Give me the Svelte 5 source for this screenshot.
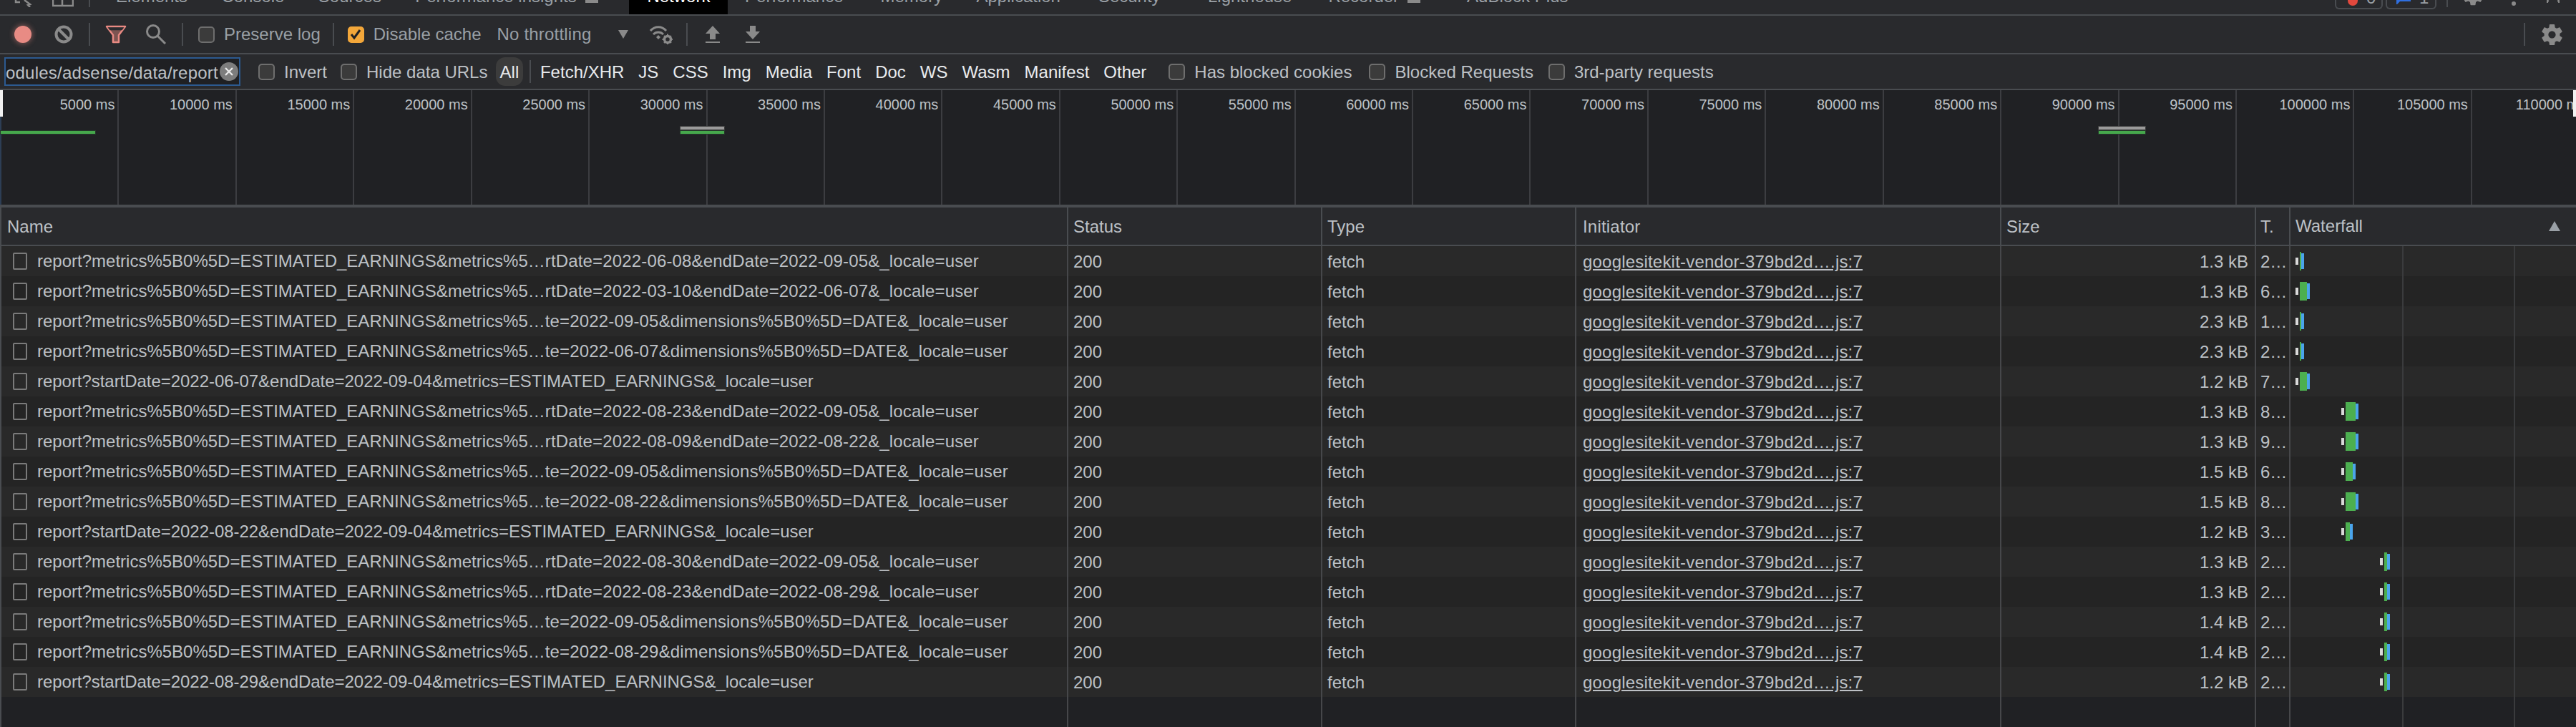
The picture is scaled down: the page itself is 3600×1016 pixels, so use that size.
<script>
  const tabs = [
    { t: 'Elements', x: 0 }, { t: 'Console', x: 0 }, { t: 'Sources', x: 0 }, { t: 'Performance insights', x: 0, flag: true },
    { t: 'Network', x: 20, on: true }, { t: 'Performance', x: 0 }, { t: 'Memory', x: 4.6 }, { t: 'Application', x: 0 },
    { t: 'Security', x: 5.6 }, { t: 'Lighthouse', x: 19 }, { t: 'Recorder', x: 3.6, flag: true }, { t: 'AdBlock Plus', x: 17.6 }
  ];
  const types = ['Fetch/XHR', 'JS', 'CSS', 'Img', 'Media', 'Font', 'Doc', 'WS', 'Wasm', 'Manifest', 'Other'];
  const ticks = Array.from({ length: 22 }, (_, i) => (i + 1) * 5000);
  const head = 'report?metrics%5B0%5D=ESTIMATED_EARNINGS&metrics%5…';
  const tail = (a, b) => ({ head, rest: `rtDate=${a}&endDate=${b}&_locale=user` });
  const dim = (a) => ({ head, rest: `te=${a}&dimensions%5B0%5D=DATE&_locale=user` });
  const start = (a, b) => ({ head: '', rest: `report?startDate=${a}&endDate=${b}&metrics=ESTIMATED_EARNINGS&_locale=user`, short: true });
  // l = left of queue bar, g = green start, gw = green width, bw = blue width (px inside waterfall cell)
  const a1 = { l: 7, g: 13, gw: 2, bw: 4 }, a2 = { l: 7, g: 13, gw: 10, bw: 4 };
  const b1 = { l: 71, g: 77, gw: 14, bw: 4 }, b2 = { l: 71, g: 77, gw: 10, bw: 4 }, b3 = { l: 71, g: 77, gw: 6, bw: 4 };
  const c = { l: 125, g: 131, gw: 4, bw: 4 };
  const rows = [
    [tail('2022-06-08', '2022-09-05'), '1.3', '2', a1],
    [tail('2022-03-10', '2022-06-07'), '1.3', '6', a2],
    [dim('2022-09-05'), '2.3', '1', a1],
    [dim('2022-06-07'), '2.3', '2', a1],
    [start('2022-06-07', '2022-09-04'), '1.2', '7', a2],
    [tail('2022-08-23', '2022-09-05'), '1.3', '8', b1],
    [tail('2022-08-09', '2022-08-22'), '1.3', '9', b1],
    [dim('2022-09-05'), '1.5', '6', b2],
    [dim('2022-08-22'), '1.5', '8', b1],
    [start('2022-08-22', '2022-09-04'), '1.2', '3', b3],
    [tail('2022-08-30', '2022-09-05'), '1.3', '2', c],
    [tail('2022-08-23', '2022-08-29'), '1.3', '2', c],
    [dim('2022-09-05'), '1.4', '2', c],
    [dim('2022-08-29'), '1.4', '2', c],
    [start('2022-08-29', '2022-09-04'), '1.2', '2', c]
  ];
  const gear = 'M19.43 12.98c.04-.32.07-.64.07-.98s-.03-.66-.07-.98l2.11-1.65c.19-.15.24-.42.12-.64l-2-3.46c-.12-.22-.39-.3-.61-.22l-2.49 1c-.52-.4-1.08-.73-1.69-.98l-.38-2.65C14.46 2.18 14.25 2 14 2h-4c-.25 0-.46.18-.49.42l-.38 2.65c-.61.25-1.17.59-1.69.98l-2.49-1c-.23-.09-.49 0-.61.22l-2 3.46c-.13.22-.07.49.12.64l2.11 1.65c-.04.32-.07.65-.07.98s.03.66.07.98l-2.11 1.65c-.19.15-.24.42-.12.64l2 3.46c.12.22.39.3.61.22l2.49-1c.52.4 1.08.73 1.69.98l.38 2.65c.03.24.24.42.49.42h4c.25 0 .46-.18.49-.42l.38-2.65c.61-.25 1.17-.59 1.69-.98l2.49 1c.23.09.49 0 .61-.22l2-3.46c.12-.22.07-.49-.12-.64l-2.11-1.65zM12 15.5c-1.93 0-3.5-1.57-3.5-3.5s1.57-3.5 3.5-3.5 3.5 1.57 3.5 3.5-1.57 3.5-3.5 3.5z';
</script>

<div class="app">
  <header class="tabbar">
    <div class="tools">
      <svg class="inspect" width="28" height="10" viewBox="0 0 28 10"><path d="M2 0v3h6M14 0l8 6-3 1 3 3" fill="none" stroke="#8a8a8a" stroke-width="2.5"/></svg>
      <svg class="device" width="30" height="10" viewBox="0 0 30 10"><path d="M1 0v8h28V0M14 0v8" fill="none" stroke="#8a8a8a" stroke-width="2.5"/></svg>
    </div>
    <i class="vsep top"></i>
    <nav class="tabs">
      {#each tabs as tab}
        <span class="tab" class:on={tab.on} style="margin-left:{tab.x}px">{tab.t}{#if tab.flag}<i class="flag"></i>{/if}</span>
      {/each}
    </nav>
    <div class="status">
      <span class="badge one"><i class="dot"></i><b>0</b></span>
      <span class="badge two"><svg width="20" height="6" viewBox="0 0 20 6"><path d="M0 0h20v2H5L1 6H0z" fill="#2f6fe0"/></svg><b>1</b></span>
      <i class="vsep top end"></i>
      <svg class="tgear" width="34" height="34" viewBox="0 0 24 24"><path d={gear} fill="#8a8a8a"/></svg>
      <i class="kebab"></i>
      <svg class="close" width="18" height="4" viewBox="0 0 18 4"><path d="M2 0l-2 4M16 0l2 4" stroke="#8a8a8a" stroke-width="3"/></svg>
    </div>
  </header>

  <section class="toolbar">
    <span class="record"></span>
    <svg class="clear" width="26" height="26" viewBox="0 0 26 26"><circle cx="13" cy="13" r="10.5" fill="none" stroke="#8a8a8a" stroke-width="4"/><path d="M6 6l14 14" stroke="#8a8a8a" stroke-width="4"/></svg>
    <i class="vsep s1"></i>
    <svg class="funnel" width="30" height="26" viewBox="0 0 30 26"><path d="M2 2h26l-9 12v10h-8V14z" fill="#7e5451" stroke="#e98a83" stroke-width="2.5" stroke-linejoin="round"/><path d="M3.5 3.2h23l-3 4h-17z" fill="#2a2b2f"/></svg>
    <svg class="search" width="30" height="28" viewBox="0 0 30 28"><circle cx="11" cy="10" r="8.5" fill="none" stroke="#8a8a8a" stroke-width="3"/><path d="M17 16l11 11" stroke="#8a8a8a" stroke-width="3"/></svg>
    <i class="vsep s2"></i>
    <label class="check preserve"><i class="box"></i><span>Preserve log</span></label>
    <i class="vsep s3"></i>
    <label class="check cache"><i class="box orange"><svg width="18" height="18" viewBox="0 0 18 18"><path d="M3 9l4 5 8-11" fill="none" stroke="#202124" stroke-width="3"/></svg></i><span>Disable cache</span></label>
    <span class="throttle">No throttling</span>
    <svg class="caret" width="14" height="12" viewBox="0 0 14 12"><path d="M0 0h14L7 12z" fill="#8a8a8a"/></svg>
    <svg class="wifi" width="32" height="28" viewBox="0 0 32 28">
      <path d="M1 9C7 2 17 2 23 9M5 14c4-4 10-4 14 0" fill="none" stroke="#8a8a8a" stroke-width="3"/>
      <path d="M9 18l3-3 3 3-3 3z" fill="#8a8a8a"/>
      <circle cx="25" cy="21" r="4.5" fill="none" stroke="#8a8a8a" stroke-width="3.5"/>
      <path d="M25 13.5v3M25 25.5v3M17.5 21h3M29.5 21h3M20 16l2 2M28 24l2 2M30 16l-2 2M22 24l-2 2" stroke="#8a8a8a" stroke-width="2"/>
    </svg>
    <i class="vsep s4"></i>
    <svg class="up" width="20" height="24" viewBox="0 0 20 24"><path d="M10 0l10 11h-6v8H6v-8H0z" fill="#8a8a8a"/><path d="M0 23h20" stroke="#8a8a8a" stroke-width="2"/></svg>
    <svg class="down" width="20" height="24" viewBox="0 0 20 24"><path d="M6 0h8v8h6L10 19 0 8h6z" fill="#8a8a8a"/><path d="M0 23h20" stroke="#8a8a8a" stroke-width="2"/></svg>
    <i class="vsep s5"></i>
    <svg class="sgear" width="35" height="35" viewBox="0 0 24 24"><path d={gear} fill="#8a8a8a"/></svg>
  </section>

  <section class="filterbar">
    <div class="input">
      <div class="value"><span>modules/adsense/data/report</span></div>
      <span class="x"><svg width="14" height="14" viewBox="0 0 14 14"><path d="M2 2l10 10M12 2L2 12" stroke="#e8e8e8" stroke-width="2.4"/></svg></span>
    </div>
    <label class="check f-invert"><i class="box"></i><span class="lt">Invert</span></label>
    <label class="check f-hide"><i class="box"></i><span class="lt">Hide data URLs</span></label>
    <span class="all">All</span>
    <i class="vsep s6"></i>
    <div class="types">{#each types as t}<span>{t}</span>{/each}</div>
    <label class="check f-blocked"><i class="box"></i><span class="lt">Has blocked cookies</span></label>
    <label class="check f-req"><i class="box"></i><span class="lt">Blocked Requests</span></label>
    <label class="check f-3rd"><i class="box"></i><span class="lt">3rd-party requests</span></label>
  </section>

  <section class="overview">
    {#each ticks as t}<div class="tick">{t} ms</div>{/each}
    <i class="edge"></i>
    <i class="handle left"></i>
    <i class="handle right"></i>
    <i class="mark g b1"></i>
    <i class="mark y b2"></i><i class="mark g b2"></i>
    <i class="mark y b3"></i><i class="mark g b3"></i>
  </section>

  <section class="table">
    <div class="row headrow">
      <div class="c name">Name</div><div class="c">Status</div><div class="c">Type</div>
      <div class="c init">Initiator</div><div class="c">Size</div><div class="c time">T.</div>
      <div class="c water">Waterfall<svg width="16" height="14" viewBox="0 0 16 14"><path d="M8 0l8 14H0z" fill="#9aa0a6"/></svg></div>
    </div>
    {#each rows as r, i}
      <div class="row body" class:alt={i % 2 === 1}>
        <div class="c name"><i class="file"></i><span class="nm">{r[0].head}<span class="rest" class:short={r[0].short}>{r[0].rest}</span></span></div>
        <div class="c">200</div>
        <div class="c">fetch</div>
        <div class="c init"><u>googlesitekit-vendor-379bd2d….js:7</u></div>
        <div class="c size">{r[1]} kB</div>
        <div class="c time">{r[2]}…</div>
        <div class="c grid">
          <i class="q" style="left:{r[3].l}px"></i>
          <i class="recv" style="left:{r[3].g}px;width:{r[3].gw}px"></i>
          <i class="dl" style="left:{r[3].g + r[3].gw}px;width:{r[3].bw}px"></i>
        </div>
      </div>
    {/each}
    <div class="row filler">
      <div class="c"></div><div class="c"></div><div class="c"></div><div class="c"></div><div class="c"></div><div class="c"></div><div class="c grid"></div>
    </div>
  </section>
</div>

<style>
  :global(body) { margin: 0; background: #202124; }
  .app { width: 3600px; height: 1016px; overflow: hidden; display: flex; flex-direction: column; font: 24px/28px "Liberation Sans", Arial, sans-serif; color: #bdc1c6; background: #202124; }
  i { display: block; }

  .tabbar { height: 20px; flex: none; display: flex; background: #292a2d; overflow: hidden; box-sizing: content-box; border-bottom: 2px solid #494c50; }
  .tools { width: 124px; flex: none; display: flex; align-items: flex-start; }
  .inspect { margin-left: 20px; }
  .device { margin-left: 25px; }
  .vsep { width: 2px; flex: none; background: #494c50; }
  .vsep.top { height: 10px; }
  .tabs { display: flex; margin-left: 12.3px; flex: none; }
  .tab { display: flex; align-items: flex-end; height: 9px; padding: 0 23.7px 11px; overflow: hidden; color: #9aa0a6; white-space: nowrap; flex: none; }
  .tab.on { background: #000; color: #fff; padding: 0 25px 11px; }
  .flag { width: 18px; height: 5px; background: #8a8a8a; margin: 0 0 5px 12px; align-self: flex-end; }
  .status { margin-left: auto; display: flex; align-items: flex-start; flex: none; }
  .badge { height: 11px; box-sizing: content-box; border: 2px solid #494c50; border-top: 0; border-radius: 0 0 6px 6px; display: flex; align-items: flex-end; overflow: hidden; }
  .badge b { font-weight: 400; color: #9aa0a6; line-height: 20px; height: 20px; margin-bottom: 4px; flex: none; }
  .one { width: 63px; }
  .two { width: 67px; margin: 0 14px 0 4px; }
  .dot { width: 14px; height: 8px; border-radius: 0 0 7px 7px; background: #e2483d; margin: 0 12px 3px 16px; flex: none; }
  .two svg { margin: 0 12px 5px 13px; flex: none; align-self: flex-start; }
  .tgear { margin: -24px 0 0 18px; }
  .kebab { width: 6px; height: 6px; border-radius: 50%; background: #8a8a8a; margin: 2px 0 0 37px; }
  .close { margin-left: 43px; margin-right: 23px; }

  .toolbar { height: 52px; flex: none; display: flex; align-items: center; background: #292a2d; border-bottom: 2px solid #494c50; color: #9aa0a6; }
  .toolbar .vsep { height: 32px; }
  .record { width: 24px; height: 24px; border-radius: 50%; background: #e88b84; box-shadow: 0 0 6px 2px rgba(232, 139, 132, .35); margin-left: 20px; flex: none; }
  .clear { margin-left: 32px; }
  .s1 { margin-left: 22px; }
  .funnel { margin-left: 21px; }
  .search { margin-left: 26px; }
  .s2 { margin-left: 21px; }
  .check { display: flex; align-items: center; flex: none; white-space: nowrap; }
  .box { width: 23px; height: 23px; box-sizing: border-box; border: 2px solid #6e6e6e; background: #3b3b3b; border-radius: 5px; flex: none; display: flex; align-items: center; justify-content: center; }
  .box.orange { background: #f3a73a; border-color: #f3a73a; }
  .preserve { margin-left: 21px; }
  .preserve span { margin-left: 13px; }
  .s3 { margin-left: 17px; }
  .cache { margin-left: 19px; }
  .cache span { margin-left: 13px; }
  .throttle { margin-left: 22px; flex: none; letter-spacing: .2px; }
  .caret { margin-left: 38px; flex: none; }
  .wifi { margin-left: 30px; flex: none; }
  .s4 { margin-left: 19px; }
  .up { margin-left: 25px; }
  .down { margin-left: 36px; }
  .s5 { margin-left: auto; }
  .sgear { margin: 0 16px 0 20px; }

  .filterbar { height: 48px; flex: none; display: flex; align-items: center; background: #292a2d; border-bottom: 2px solid #494c50; color: #e8eaed; position: relative; }
  .input { width: 330px; height: 40px; box-sizing: border-box; border: 2px solid #2c5a90; background: #1f2023; margin-left: 6px; position: relative; flex: none; }
  .value { position: absolute; left: 0; top: 0; bottom: 0; width: 297px; padding-top: 3px; box-sizing: border-box; overflow: hidden; display: flex; justify-content: flex-end; align-items: center; color: #bdc1c6; white-space: nowrap; letter-spacing: .24px; }
  .value span { flex: none; }
  .x { position: absolute; right: 1px; top: 5px; width: 26px; height: 26px; border-radius: 50%; background: #7d7d7d; display: flex; align-items: center; justify-content: center; }
  .lt { color: #bdc1c6; margin-left: 13px; padding-top: 2px; }
  .f-invert { margin-left: 25px; }
  .f-hide { margin-left: 19px; }
  .all { margin-left: 11.5px; width: 38px; height: 40px; line-height: 42px; text-align: center; border-radius: 13px; background: #3c3c3c; flex: none; }
  .s6 { height: 32px; margin-left: 9px; }
  .types { display: flex; gap: 20px; margin-left: 13px; flex: none; padding-top: 2px; }
  .f-blocked { margin-left: 31px; }
  .f-req { margin-left: 24px; }
  .f-3rd { margin-left: 21px; }

  .overview { height: 160px; flex: none; display: grid; grid-template-columns: repeat(22, 164.43px); padding-left: 2px; box-sizing: content-box; background: #202124; border-bottom: 4px solid #494c50; position: relative; overflow: hidden; }
  .tick { border-right: 2px solid #3c3d41; box-sizing: border-box; padding-right: 4px; text-align: right; font-size: 20px; line-height: 40px; white-space: nowrap; color: #bdc1c6; }
  .edge { position: absolute; left: 0; top: 37px; bottom: 0; width: 2px; background: #2d3e55; }
  .handle { position: absolute; top: 0; width: 4px; height: 37px; background: #f1f1f1; }
  .handle.left { left: 0; }
  .handle.right { right: 0; }
  .mark { position: absolute; height: 6px; box-sizing: border-box; }
  .mark.g { top: 56px; background: #46a84c; border: 1px solid #25382b; }
  .mark.y { top: 50px; background: #9b9b9b; border: 1px solid #3d3d3d; }
  .b1 { left: 0; width: 134px; }
  .b2 { left: 950px; width: 63px; }
  .b3 { left: 2932px; width: 67px; }

  .table { flex: 1; min-height: 0; display: flex; flex-direction: column; border-left: 2px solid #494c50; }
  .row { display: grid; grid-template-columns: 1491px 355px 355px 594px 356px 48px 399px; flex: none; }
  .c { box-sizing: border-box; border-right: 2px solid #494c50; padding-left: 7px; white-space: nowrap; overflow: hidden; }
  .headrow { height: 52px; background: #292a2d; border-bottom: 2px solid #494c50; box-sizing: content-box; }
  .headrow .c { line-height: 54px; }
  .headrow .name { padding-left: 8px; }
  .headrow .water { border-right: 0; display: flex; justify-content: space-between; align-items: center; padding-right: 22px; }
  .body { height: 42px; background: #292929; }
  .body.alt { background: #242424; }
  .body .c { line-height: 44px; border-right-color: #46474a; }
  .init { padding-left: 9px; letter-spacing: .2px; }
  .body .name { display: flex; align-items: center; padding-left: 16px; }
  .nm { margin-left: 14px; flex: none; }
  .rest { letter-spacing: .16px; }
  .rest.short { letter-spacing: -.04px; }
  .file { width: 20px; height: 24px; box-sizing: border-box; border: 2px solid #7a7a7a; border-radius: 2px; flex: none; }
  .size { text-align: right; padding-right: 9px; }
  .time { padding-left: 6px; padding-right: 0; }
  .grid { position: relative; border-right: 0; background-image: linear-gradient(#3a3b3d, #3a3b3d), linear-gradient(#3a3b3d, #3a3b3d); background-size: 2px 100%; background-position: 156px 0, 312px 0; background-repeat: no-repeat; }
  .q, .recv, .dl { position: absolute; }
  .q { width: 4px; height: 10px; top: 16px; background: #d9d9d9; }
  .recv { top: 8px; height: 26px; background: #4caf50; }
  .dl { top: 10px; height: 22px; background: #4aa5ec; }
  .filler { flex: 1; min-height: 0; background: #202124; }
  .filler .c { border-right-color: #46474a; }
</style>
